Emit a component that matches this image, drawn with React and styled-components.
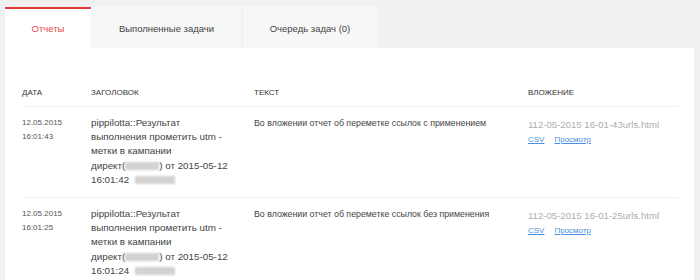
import React, { Fragment } from "react";
import styled, { createGlobalStyle } from "styled-components";

const GlobalStyle = createGlobalStyle`
  html, body {
    margin: 0;
    padding: 0;
    background: #f1f1f1;
    font-family: "Liberation Sans", Arial, sans-serif;
  }
`;

const Page = styled.div`
  padding: 7px 6px 0 5px;
  min-height: 100vh;
  box-sizing: border-box;
  display: flex;
  flex-direction: column;
`;

// Tabs

const TabBar = styled.div`
  display: flex;
  height: 41px;
  flex-shrink: 0;
`;

const Tab = styled.div`
  width: ${props => props.width}px;
  box-sizing: border-box;
  display: flex;
  align-items: center;
  justify-content: center;
  font-size: 9.5px;
  color: ${props => (props.active ? "#e8474c" : "#444444")};
  background: ${props => (props.active ? "#ffffff" : "#f7f7f7")};
  border-top: 2px solid ${props => (props.active ? "#e53a3a" : "transparent")};
  border-left: ${props => (props.divider ? "1px solid #eeeeee" : "none")};
  padding-bottom: 1px;
`;

// Panel / table

const Panel = styled.div`
  flex: 1;
  background: #ffffff;
  padding: 0 16px 0 17px;
`;

const Row = styled.div`
  display: grid;
  grid-template-columns: 69px 163px 274px 1fr;
  border-bottom: 1px solid #efefef;
  padding: ${props => (props.head ? "39px 0 7px" : "9px 0 10px")};
`;

const HeadCell = styled.div`
  font-size: 8px;
  line-height: 12px;
  text-transform: uppercase;
  color: #333333;
`;

const DateCell = styled.div`
  font-size: 8px;
  line-height: 14px;
  color: #555555;
`;

const TitleCell = styled.div`
  font-size: 9.8px;
  line-height: 14.2px;
  color: #444444;
  white-space: nowrap;
`;

const TextCell = styled.div`
  font-size: 8.8px;
  line-height: 14px;
  color: #444444;
`;

const AttachCell = styled.div`
  display: flex;
  flex-direction: column;
  padding-top: 2px;
`;

const FileName = styled.div`
  font-size: 9.6px;
  line-height: 14px;
  color: #adadad;
`;

const Links = styled.div`
  display: flex;
  gap: 10px;
  font-size: 8px;
  line-height: 11px;
  padding-top: 2px;
`;

const Link = styled.a`
  color: #4a8fe0;
  text-decoration: underline;
`;

const Blur = styled.span`
  display: inline-block;
  width: ${props => props.w}px;
  height: 8px;
  vertical-align: -1px;
  background: #d2d2d2;
  filter: blur(1.2px);
  margin: ${props => props.m || "0"};
`;

const reports = [
  {
    date: "12.05.2015",
    time: "16:01:43",
    stamp: "16:01:42",
    text: "Во вложении отчет об переметке ссылок с применением",
    file: "112-05-2015 16-01-43urls.html"
  },
  {
    date: "12.05.2015",
    time: "16:01:25",
    stamp: "16:01:24",
    text: "Во вложении отчет об переметке ссылок без применения",
    file: "112-05-2015 16-01-25urls.html"
  }
];

function App() {
  return (
    <Fragment>
      <GlobalStyle />
      <Page>
        <TabBar>
          <Tab width={86} active>
            Отчеты
          </Tab>
          <Tab width={151}>Выполненные задачи</Tab>
          <Tab width={135} divider>
            Очередь задач (0)
          </Tab>
        </TabBar>
        <Panel>
          <Row head>
            <HeadCell>Дата</HeadCell>
            <HeadCell>Заголовок</HeadCell>
            <HeadCell>Текст</HeadCell>
            <HeadCell>Вложение</HeadCell>
          </Row>
          {reports.map((r, i) => (
            <Row key={i}>
              <DateCell>
                {r.date}
                <br />
                {r.time}
              </DateCell>
              <TitleCell>
                pippilotta::Результат
                <br />
                выполнения прометить utm -
                <br />
                метки в кампании
                <br />
                директ(
                <Blur w={34} />) от 2015-05-12
                <br />
                {r.stamp}
                <Blur w={40} m="0 0 0 6px" />
              </TitleCell>
              <TextCell>{r.text}</TextCell>
              <AttachCell>
                <FileName>{r.file}</FileName>
                <Links>
                  <Link href="#">CSV</Link>
                  <Link href="#">Просмотр</Link>
                </Links>
              </AttachCell>
            </Row>
          ))}
        </Panel>
      </Page>
    </Fragment>
  );
}

export default App;
